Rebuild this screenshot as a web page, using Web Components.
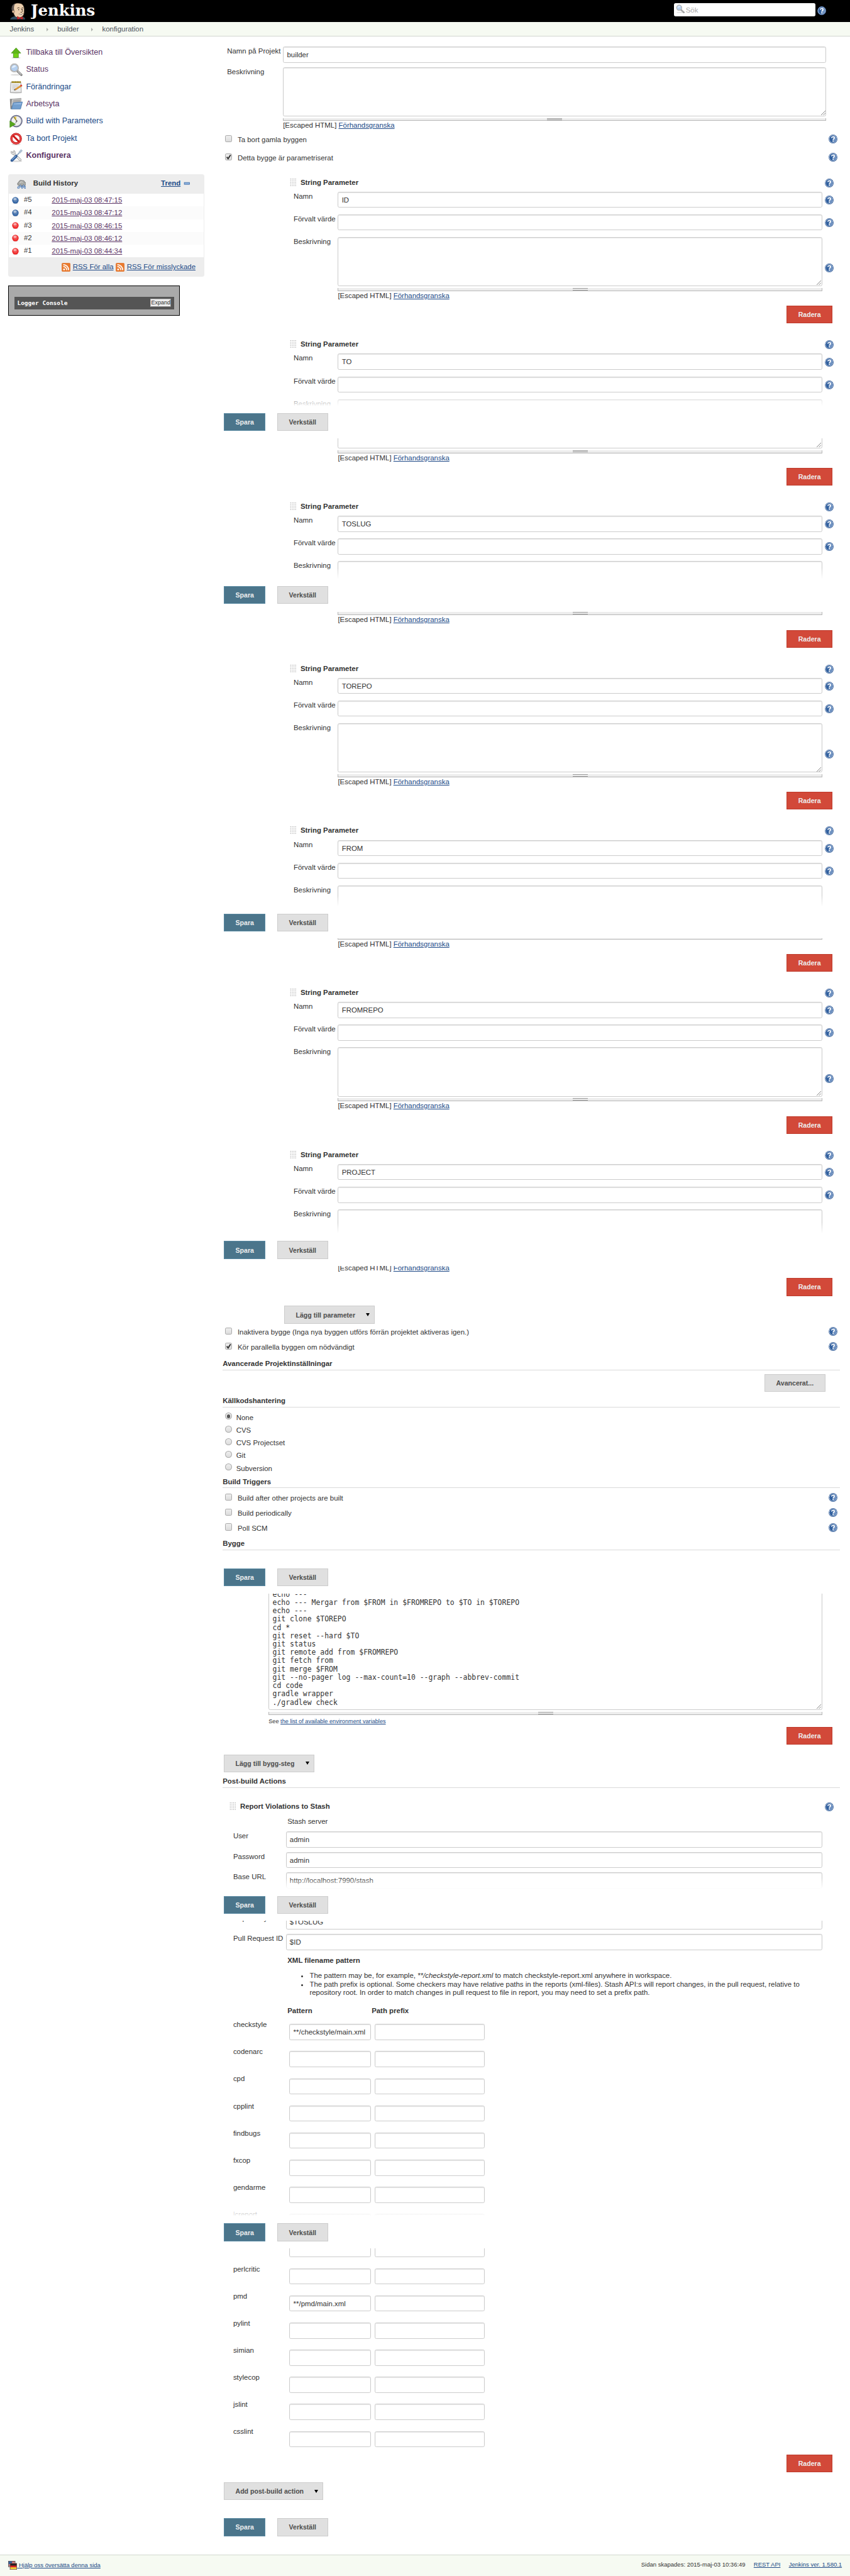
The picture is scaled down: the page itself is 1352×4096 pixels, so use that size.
<!DOCTYPE html>
<html lang="sv">
<head>
<meta charset="utf-8">
<title>builder Config [Jenkins]</title>
<style>
html,body{margin:0;padding:0;background:#fff;overflow:hidden}
body{font-family:"Liberation Sans",Arial,sans-serif;font-size:13px;color:#333}
jk-page{zoom:.881}
</style>
</head>
<body>
<jk-page></jk-page>
<script>
const define=(name,render,css)=>customElements.define(name,class extends HTMLElement{
  constructor(){super();this.attachShadow({mode:'open'});}
  connectedCallback(){
    const a=k=>this.getAttribute(k)||'';
    this.shadowRoot.innerHTML='<style>*{box-sizing:border-box}a{color:#204a87;text-decoration:underline}:host{display:block}'+(css||'')+'</style>'+render(a,this);
  }
});

const ICONS={
up:`<ellipse cx="12" cy="21.5" rx="8" ry="1.5" fill="#000" opacity=".15"/><path d="M12 3.5 20.5 13h-4.300v8h-9v-8H3.500z" fill="#5fb61a" stroke="#3d8a0c" stroke-width=".8"/><path d="M8 14v6.300h7.500V14z" fill="#73d216"/>`,
search:`<ellipse cx="11" cy="21.500" rx="9" ry="1.600" fill="#000" opacity=".12"/><path d="M14 14.500 21.500 21.500" stroke="#777" stroke-width="4" stroke-linecap="round"/><path d="M15.500 15.500 21 20.800" stroke="#c4c4c4" stroke-width="2" stroke-linecap="round"/><circle cx="9" cy="9" r="7" fill="#b5d0f0" stroke="#999" stroke-width="2.200"/><circle cx="9" cy="9" r="7" fill="none" stroke="#ddd" stroke-width="1"/><path d="M4.500 9a5 5 0 0 1 8-3.500q-3 3.500-8 3.500" fill="#e4effb"/>`,
notepad:`<ellipse cx="12" cy="22" rx="11" ry="1.500" fill="#000" opacity=".15"/><path d="M2.500 3h18l1 18.500h-20z" fill="#eee" stroke="#999" stroke-width="1"/><path d="M4 1.500h16.500v3H4z" fill="#b8a13a"/><path d="M5 1v3.500M8 1v3.500M11 1v3.500M14 1v3.500M17 1v3.500M20 1v3.500" stroke="#7c6a18" stroke-width=".8"/><path d="M5 8h12M5 10.500h10M5 13h6M5 15.500h5" stroke="#bbb" stroke-width="1"/><path d="M10 16.500 21 9.500" stroke="#c77b1b" stroke-width="3"/><path d="M10.500 16 20 10" stroke="#f0b24c" stroke-width="1.200"/><path d="M20.500 9.800 22.500 8.500" stroke="#d33" stroke-width="3.200"/><path d="M8 18l1.200-2.800 1.700 2.400z" fill="#444"/>`,
folder:`<path d="M.8 2.500h4V21h-3z" fill="#888"/><path d="M4 3 21 1.500 20 15H3z" fill="#c9c9c9" stroke="#888" stroke-width=".8"/><path d="M7 4.500 19.500 3.500l-.5 5H6z" fill="#aaa"/><path d="M7 9.500 23.500 8 20 20.800H3.800z" fill="#729fcf" stroke="#4573a8" stroke-width=".9"/><path d="M8 10.700 22 9.500l-.8 3H7.500z" fill="#92b7e0"/>`,
clock:`<circle cx="12.500" cy="12" r="10" fill="#eee" stroke="#777a94" stroke-width="2.400"/><path d="M12 12 7 5.500q2.500-2 5.500-1.500z" fill="#edd04a"/><path d="M8 4.500 13.500 12l-2.500 3.500" stroke="#444" stroke-width="1" fill="none"/><circle cx="13" cy="12" r="1.300" fill="#555"/><path d="M.8 11.500 11 17.500.8 23.500z" fill="#57a71c" stroke="#367a0b" stroke-width=".6"/>`,
no:`<ellipse cx="12" cy="22.500" rx="8" ry="1.200" fill="#000" opacity=".15"/><circle cx="12" cy="12" r="8.500" fill="#fff" stroke="#b80f0f" stroke-width="4"/><circle cx="12" cy="12" r="8.500" fill="none" stroke="#e64545" stroke-width="2.600"/><path d="M6.300 6.300 17.700 17.700" stroke="#cc1a1a" stroke-width="3.400"/>`,
tools:`<ellipse cx="12" cy="22" rx="11" ry="1.400" fill="#000" opacity=".15"/><path d="M6 6.500 19.500 19.500" stroke="#999" stroke-width="4.200" stroke-linecap="round"/><path d="M6 6.500 19.500 19.500" stroke="#ececec" stroke-width="2.600" stroke-linecap="round"/><path d="M3 4v3.500q2 3.500 5.500 2.500l2-2q1-4-2.500-6L8 5 6 6.500z" fill="#ddd" stroke="#999" stroke-width=".8"/><path d="M22 2 13 12" stroke="#8ba4bd" stroke-width="2"/><path d="M22.500 1.500 18 6.500" stroke="#b2c2d2" stroke-width="4"/><path d="M12 13 4.500 20.500" stroke="#345f99" stroke-width="5" stroke-linecap="round"/><path d="M11.500 12.800 4.500 19.500" stroke="#7da6d8" stroke-width="1.500"/>`,
help:`<circle cx="8" cy="8" r="7.900" fill="#2f5894"/><circle cx="8" cy="8" r="6.700" fill="none" stroke="#e6eef8" stroke-width=".9"/><circle cx="8" cy="8" r="6.200" fill="#31609f"/><path d="M8 1.800a6.200 6.200 0 0 1 0 12.400z" fill="#6f92c2"/><path d="M5.600 6.300Q5.600 4 8 4t2.300 2.100Q10.300 7.400 8.900 8.100 8 8.600 8 9.600" fill="none" stroke="#fff" stroke-width="1.900"/><path d="M7 10.700h2v2H7z" fill="#fff"/>`,
ball:`<ellipse cx="8" cy="14.500" rx="6" ry="1.500" fill="#000" opacity=".15"/><circle cx="8" cy="8" r="7.500" fill="var(--ball)"/><circle cx="8" cy="7" r="5.200" fill="#fff" opacity=".18"/><ellipse cx="7" cy="5" rx="3.700" ry="2.900" fill="#fff" opacity=".5"/>`,
rain:`<path d="M3.500 10a3 3 0 0 1-.5-5.800A4 4 0 0 1 9 1.300a4 4 0 0 1 5 3.200 2.800 2.800 0 0 1-.8 5.500z" fill="#aaaba6" stroke="#666" stroke-width=".9"/><path d="M5 5.500q2-3.500 5-1" stroke="#d2d2ce" stroke-width="1.500" fill="none"/><g fill="#cfe0f5" stroke="#31609f" stroke-width="1"><ellipse cx="2.600" cy="13.500" rx="1.400" ry="2"/><ellipse cx="6" cy="10.700" rx="1.300" ry="1.700"/><ellipse cx="9" cy="13" rx="1.400" ry="1.900"/><ellipse cx="11.500" cy="10.500" rx="1.200" ry="1.700"/><ellipse cx="14.200" cy="13.500" rx="1.400" ry="2"/></g>`,
rss:`<rect x=".3" y=".3" width="15.400" height="15.400" rx="2.500" fill="#ea7a2e" stroke="#d56318" stroke-width=".6"/><circle cx="4.500" cy="11.800" r="1.600" fill="#fff"/><path d="M3 6.700a6.300 6.300 0 0 1 6.300 6.300M3 3.300A9.700 9.700 0 0 1 12.700 13" stroke="#fff" stroke-width="1.900" fill="none"/>`,
minus:`<rect x=".5" y="5.500" width="11" height="4" fill="#8fb3de" stroke="#3465a4"/>`,
grip:`<path d="M1.500 0v15M4.500 0v15M7.500 0v15M10.500 0v15" stroke="#a6a6a6" stroke-width="1.300" stroke-dasharray="1.300 1.700"/>`,
flags:`<rect x=".5" y=".5" width="12" height="10" fill="#e8b5b5" stroke="#555"/><path d="M1 2h11M1 5h11M1 8h11" stroke="#c33" stroke-width="1.300"/><path d="M1 1h6v5H1z" fill="#31609f"/><rect x="3.500" y="4.500" width="12" height="11" fill="#d22" stroke="#555"/><path d="M4 5h11v3.500H4z" fill="#222"/><path d="M4 11.500h11V15H4z" fill="#f0cf3a"/>`,
head:`<path d="M0 31Q1 26 8 25l9-1q9 1 10 5v2z" fill="#2e4a5c"/><path d="M4 12Q3 3 12 1.200 23 0 25 8q1 4 .5 10Q25 26 17 27.500 9 28 7 21z" fill="#eccfae" stroke="#3a2c22" stroke-width=".8"/><path d="M3.500 16Q.5 5 9 1.800 6 8 7.500 14l-1.500 5q-2 0-2.500-3z" fill="#5c5350"/><circle cx="5.800" cy="16.500" r="2.300" fill="#e2bd98" stroke="#3a2c22" stroke-width=".5"/><path d="M13 10.500q2-2 4-.5M21 10q1.500-1 3 0M20 11q4 5 1.500 6.500h-2.500M16 20.500q3.500 3 8-.5" stroke="#3a2c22" stroke-width="1" fill="none"/><path d="M17 21q3 1.500 6 0" stroke="#fff" stroke-width="1"/><circle cx="15.500" cy="13" r=".9" fill="#222"/><circle cx="22" cy="12.500" r=".9" fill="#222"/><path d="M13 25l5 2.500 5-2v5.300l-5-2-5 2z" fill="#d2262b" stroke="#7c1013" stroke-width=".5"/>`
};
define('jk-icon',a=>{
  const w=a('w')||16,h=a('h')||w,v=a('box')||`${w} ${h}`;
  return `<svg width="${w}" height="${h}" viewBox="0 0 ${v}" aria-hidden="true">${ICONS[a('name')]}</svg>`;
},':host{display:block;flex:none}svg{display:block}');

define('jk-header',()=>`
<div class="logo"><jk-icon name="head" w="28" h="31" box="28 31"></jk-icon>
<svg width="120" height="36"><text x="0" y="25.300" textLength="116" lengthAdjust="spacingAndGlyphs" font-family="DejaVu Serif" font-weight="bold" font-size="27.500" fill="#fff">Jenkins</text></svg></div>
<div class="right"><div class="search"><jk-icon name="search" w="16" box="24 24"></jk-icon><span>Sök</span></div><jk-icon name="help"></jk-icon></div>`,
`:host{background:#000;height:40px;display:flex;justify-content:space-between;padding:0 43px 0 18px}
.logo{display:flex;gap:10px;padding-top:4px}.logo svg{margin-top:-1px}
.right{display:flex;gap:4px;padding-top:6px}.right>jk-icon{margin-top:5px}
.search{width:255px;height:24px;background:#fff;border-radius:3px;display:flex;align-items:center;gap:2px;padding:1px 0 0 3px;color:#aaa}
.search jk-icon{margin-top:-3px;height:17px}`);

define('jk-crumbs',()=>'<span>Jenkins</span><i></i><span>builder</span><i></i><span>konfiguration</span>',
`:host{display:flex;height:26px;background:#f6faf2;border-bottom:1px solid #d3d7cf;padding-left:17.500px;color:#4d545d;line-height:25px}
i{width:4px;margin:9.500px 16px 0 22px;height:0;border:4px solid transparent;border-left-color:#b0b3ae;border-right:0}`);

define('jk-task',a=>`<jk-icon name="${a('icon')}" w="24"></jk-icon><span><slot></slot></span>`,
`:host{display:flex;height:31px;gap:6px;font-size:14.300px;line-height:24px;color:#204a87}
:host([visited]){color:#5c3566}:host([current]){font-weight:bold}`);

define('jk-build',a=>`<jk-icon name="ball" w="12.500" box="16 16" style="--ball:${a('color')}"></jk-icon><b>#${a('n')}</b><a>${a('date')}</a>`,
`:host{display:flex;height:23px;padding-left:6px;line-height:22px}:host([alt]){background:#fbfbfb}
jk-icon{margin-top:5px;width:21px}b{font-weight:normal;width:50.500px}a{color:#5c3566;line-height:24px}`);

define('jk-history',()=>`
<header><jk-icon name="rain" w="16.500" box="16 16"></jk-icon><b>Build History</b><a>Trend</a><jk-icon name="minus" w="12" box="12 14"></jk-icon></header>
<section><jk-build n="5" color="#3465a4" date="2015-maj-03 08:47:15"></jk-build>
<jk-build alt n="4" color="#3465a4" date="2015-maj-03 08:47:12"></jk-build>
<jk-build n="3" color="#ef2929" date="2015-maj-03 08:46:15"></jk-build>
<jk-build alt n="2" color="#ef2929" date="2015-maj-03 08:46:12"></jk-build>
<jk-build n="1" color="#ef2929" date="2015-maj-03 08:44:34"></jk-build></section>
<footer><jk-icon name="rss"></jk-icon><a>RSS För alla</a><jk-icon name="rss"></jk-icon><a>RSS För misslyckade</a></footer>`,
`:host{background:#ededed;border-radius:4px;width:354px;height:185px;padding:0 1px;box-sizing:border-box}
header{height:35px;display:flex;padding:0 25px 0 14.500px;line-height:34px}header b{margin-left:13px;flex:1}header a{font-weight:bold}
header jk-icon{margin-top:9.500px}header jk-icon:last-child{margin-left:5px;margin-top:10px}
section{background:#fff}footer{display:flex;justify-content:flex-end;padding:9px 15px 0 0;gap:4px;line-height:17px}footer jk-icon{margin-top:1px}`);

define('jk-logger',()=>'<div><b>Logger Console</b><span>Expand</span></div>',
`:host{width:310px;height:55px;background:#aaa;border:1px solid #000;padding:20px 10px 0;margin-top:15px;box-sizing:border-box}
div{background:#555;height:23px;display:flex;justify-content:space-between;padding:3px 5px 0}
b{font:bold 10.800px/17px "DejaVu Sans Mono",monospace;color:#fff}span{background:#eee;border:1px solid #bbb;border-right-color:#888;border-bottom-color:#888;font-size:10.200px;line-height:13px;height:15px;padding:0 1px;width:38px;text-align:center;white-space:nowrap}`);

define('jk-button',a=>'<slot></slot>'+(a('menu')?'<i></i>':''),
`:host{display:inline-flex;align-items:center;height:32px;padding:0 20px;background:#e0e0e0;border:1px solid #ccc;color:#4d4d4d;font-weight:bold;font-size:12px;white-space:nowrap;box-sizing:border-box}
:host([kind=primary]){background:#4b758b;border-color:#5788a1;color:#eee}:host([kind=danger]){background:#d24939;border-color:#be3a2b;color:#eee}
:host([menu]){padding-right:8px;justify-content:space-between}i{border:4px solid transparent;border-top:6.500px solid #000;border-bottom:0}`);

define('jk-row',()=>'<slot></slot>',':host{display:flex}:host([end]){justify-content:flex-end}');

define('jk-input',a=>`<span>${a('value')}</span>`,
`:host{height:29px;border:1px solid #ccc;border-radius:3px;background:#fff;box-shadow:inset 0 1px 1.500px rgba(0,0,0,.1);padding:0 6px;line-height:27.500px;box-sizing:border-box;white-space:nowrap;overflow:hidden}`);

define('jk-textarea',()=>`<div class="box"><slot></slot><svg width="8" height="8"><path d="M0 8 8 0M4 8 8 4" stroke="#666" stroke-width=".9"/></svg></div><div class="bar"><i></i></div><div class="note"><slot name="note"></slot></div>`,
`.box{height:var(--h,89px);border:1px solid #ccc;border-radius:3px;background:#fff;box-shadow:inset 0 1px 1.500px rgba(0,0,0,.1);position:relative}
svg{position:absolute;right:1px;bottom:1px}.bar{margin-top:3px;height:5.500px;background:#ededed;border:1px solid #b8b8b8;border-top:0;display:flex;justify-content:center}
i{width:27px;height:4.200px;border:1px solid #999;border-width:1.200px 0}.note{line-height:16px;white-space:nowrap}`);

define('jk-field',a=>`<label>${a('label')}</label>${a('area')?'<jk-textarea><span slot="note">[Escaped HTML] <a>Förhandsgranska</a></span></jk-textarea>':`<jk-input value="${a('value')}"></jk-input>`}${a('help')?'<jk-icon name="help"></jk-icon>':''}`,
`:host{display:grid;grid-template-columns:var(--label) var(--control) 16px;margin-left:var(--indent);height:29px}
:host([area]){height:113.500px}label{line-height:16px;white-space:nowrap}jk-icon{margin:7px 0 0 4px}:host([area]) jk-icon{margin-top:48px}`);

define('jk-title',a=>`<jk-icon name="grip" w="12" h="15"></jk-icon><b><slot></slot></b><jk-icon name="help"></jk-icon>`,
`:host{display:flex;height:16px;margin-right:12px}b{flex:1;margin-left:7.500px;line-height:15px}`);

define('jk-param',a=>`<jk-title>String Parameter</jk-title><jk-field style="margin-top:8px" label="Namn" value="${a('name')}" help="1"></jk-field>
<jk-field style="margin-top:12px" label="Förvalt värde" help="1"></jk-field><jk-field style="margin-top:12px" label="Beskrivning" area="1" help="1"></jk-field>
<jk-row end><jk-button kind="danger">Radera</jk-button></jk-row>`,
`:host{--indent:128px;--label:80px;--control:875px;height:292.500px}jk-title{margin-left:121px}jk-row{margin:10.500px 14px 0 0}`);

define('jk-check',a=>`<i>${a('on')?'<svg width="13" height="13"><path d="M3 6.500 5.500 9.500 10 2.500" fill="none" stroke="#333" stroke-width="2.200"/></svg>':''}</i><span><slot></slot></span><jk-icon name="help"></jk-icon>`,
`:host{display:flex;height:16px;padding:0 5px 0 4px}i{width:12.500px;height:13px;margin-top:1px;border:1px solid #aaa;border-radius:2.500px;background:linear-gradient(#eee,#dcdcdc)}svg{display:block;margin:-1px}
span{flex:1;margin-left:10.500px;line-height:20px}`);

define('jk-radio',a=>`<i>${a('on')?'<u></u>':''}</i><span><slot></slot></span>`,
`:host{display:flex;height:23px;padding-left:4.500px}i{width:12px;height:12.500px;margin-top:1px;border:1px solid #aaa;border-radius:50%;background:linear-gradient(#eee,#dcdcdc);display:grid;place-items:center}u{width:6px;height:6px;border-radius:50%;background:#555}span{margin-left:8px;line-height:20px}`);

define('jk-section',()=>'<slot></slot>',':host{height:20px;line-height:18px;font-weight:bold;border-bottom:1px solid #dadada;box-sizing:border-box}');

define('jk-savebar',()=>'<jk-button kind="primary">Spara</jk-button><jk-button>Verkställ</jk-button>',
`:host{display:flex;gap:21px;padding-left:2px}
:host([floating]){position:absolute;left:0;right:0;height:78px;box-sizing:border-box;padding-top:33px;background:linear-gradient(rgba(255,255,255,0),#fff 20px)}`);

define('jk-violation',a=>`<span>${a('name')}</span><jk-input value="${a('value')}"></jk-input><jk-input></jk-input>`,
`:host{display:grid;grid-template-columns:94px 148px 198px;column-gap:7px;margin-left:19px;height:49px}
span{line-height:16px}jk-input{margin-top:7px;padding-left:6.500px}`);

define('jk-config',()=>{
const params=['ID','TO','TOSLUG','TOREPO','FROM','FROMREPO','PROJECT'].map(n=>`<jk-param name="${n}"></jk-param>`).join('');
const bars=[746,1058,1649,2240,2831,3422,4013].map(y=>`<jk-savebar floating style="top:${y-33-66}px"></jk-savebar>`).join('');
const tools=['checkstyle','codenarc','cpd','cpplint','findbugs','fxcop','gendarme','jcreport','','perlcritic','pmd','pylint','simian','stylecop','jslint','csslint']
 .map(n=>`<jk-violation name="${n}" value="${n==='checkstyle'||n==='pmd'?`**/${n}/main.xml`:''}"></jk-violation>`).join('');
const m=n=>`style="margin-top:${n}px"`;
return `
<jk-field class="top" label="Namn på Projekt" value="builder"></jk-field>
<jk-field class="top" ${m(8)} label="Beskrivning" area="1"></jk-field>
<jk-check ${m(8.5)}>Ta bort gamla byggen</jk-check>
<jk-check ${m(17)} on="1">Detta bygge är parametriserat</jk-check>
<div ${m(30)}>${params}</div>
<jk-row style="margin:-12.500px 0 0 111px"><jk-button menu="1" style="width:164px">Lägg till parameter</jk-button></jk-row>
<jk-check ${m(6)}>Inaktivera bygge (Inga nya byggen utförs förrän projektet aktiveras igen.)</jk-check>
<jk-check ${m(11)} on="1">Kör parallella byggen om nödvändigt</jk-check>
<jk-section ${m(15)}>Avancerade Projektinställningar</jk-section>
<jk-row end style="margin:7px 27px 0 0"><jk-button>Avancerat...</jk-button></jk-row>
<jk-section ${m(8)}>Källkodshantering</jk-section>
<jk-radio ${m(9)} on="1">None</jk-radio><jk-radio>CVS</jk-radio><jk-radio>CVS Projectset</jk-radio><jk-radio>Git</jk-radio><jk-radio>Subversion</jk-radio>
<jk-section ${m(2)}>Build Triggers</jk-section>
<jk-check ${m(9)}>Build after other projects are built</jk-check>
<jk-check ${m(11)}>Build periodically</jk-check>
<jk-check ${m(11)}>Poll SCM</jk-check>
<jk-section ${m(13)}>Bygge</jk-section>
<jk-textarea style="--h:267px;margin:22px 32px 0 83px"><pre>echo ---
echo --- Mergar from $FROM in $FROMREPO to $TO in $TOREPO
echo ---
git clone $TOREPO
cd *
git reset --hard $TO
git status
git remote add from $FROMREPO
git fetch from
git merge $FROM
git --no-pager log --max-count=10 --graph --abbrev-commit
cd code
gradle wrapper
./gradlew check</pre><div slot="note" class="see">See <a>the list of available environment variables</a></div></jk-textarea>
<jk-row end style="margin:1.500px 14px 0 0"><jk-button kind="danger">Radera</jk-button></jk-row>
<jk-row style="margin:18px 0 0 2px"><jk-button menu="1" style="width:164px">Lägg till bygg-steg</jk-button></jk-row>
<jk-section ${m(8)}>Post-build Actions</jk-section>
<jk-title style="margin-top:26px;margin-left:12px">Report Violations to Stash</jk-title>
<p ${m(11)}>Stash server</p>
<div class="stash"><jk-field label="User" value="admin"></jk-field><jk-field label="Password" value="admin"></jk-field><jk-field label="Base URL" value="http://localhost:7990/stash"></jk-field><jk-field label="" value=""></jk-field><jk-field label="Repository" value="$TOSLUG"></jk-field><jk-field label="Pull Request ID" value="$ID"></jk-field></div>
<p ${m(11)}><b>XML filename pattern</b></p>
<ul><li>The pattern may be, for example, <em>**/checkstyle-report.xml</em> to match checkstyle-report.xml anywhere in workspace.</li>
<li>The path prefix is optional. Some checkers may have relative paths in the reports (xml-files). Stash API:s will report changes, in the pull request, relative to repository root. In order to match changes in pull request to file in report, you may need to set a prefix path.</li></ul>
<p class="cols"><b>Pattern</b><b>Path prefix</b></p>
<div ${m(9.5)}>${tools}</div>
<jk-row end style="margin:.5px 14px 0 0"><jk-button kind="danger">Radera</jk-button></jk-row>
<jk-row style="margin:18px 0 0 2px"><jk-button menu="1" style="width:180px">Add post-build action</jk-button></jk-row>
<jk-savebar ${m(33)}></jk-savebar>${bars}`;},
`:host{position:relative;width:1115px;padding-top:18px;display:block;box-sizing:border-box}
.top{--indent:8px;--label:101px;--control:981px}.stash{--indent:19px;--label:95px;--control:969px;display:grid;gap:8px;margin-top:10px}
pre{margin:0;padding:49.500px 0 0 6px;font:13px/15px "DejaVu Sans Mono",monospace}.see{font-size:10.400px;padding-top:4px}
p{margin:0 0 0 117px;line-height:16px}ul{margin:12.500px 0 0 117px;padding-left:40px;line-height:15px;width:932px}
.cols{display:flex;margin-top:16.500px}.cols b:first-child{width:152px}`);

define('jk-footer',()=>`<div class="l"><jk-icon name="flags"></jk-icon><a>&nbsp;Hjälp oss översätta denna sida</a></div><div class="r"><span>Sidan skapades: 2015-maj-03 10:36:49</span><a>REST API</a><a>Jenkins ver. 1.580.1</a></div>`,
`:host{position:relative;display:flex;justify-content:space-between;height:39px;background:#f6faf2;border-top:1px solid #d3d7cf;padding:9.500px 15px 0;font-size:10.800px;line-height:14px;margin-top:34px;box-sizing:border-box}
.l{display:flex}.l a{line-height:15px}.r{display:flex;gap:15px}`);

define('jk-page',()=>`<jk-header></jk-header><jk-crumbs></jk-crumbs>
<main><nav><jk-task icon="up" visited>Tillbaka till Översikten</jk-task><jk-task icon="search" visited>Status</jk-task><jk-task icon="notepad">Förändringar</jk-task><jk-task icon="folder" visited>Arbetsyta</jk-task><jk-task icon="clock">Build with Parameters</jk-task><jk-task icon="no">Ta bort Projekt</jk-task><jk-task icon="tools" visited current>Konfigurera</jk-task>
<div><jk-history></jk-history><jk-logger></jk-logger></div></nav><jk-config></jk-config></main><jk-footer></jk-footer>`,
`:host{width:1535px;height:4650px;background:#fff;overflow:hidden}
main{display:flex}nav{width:402px;flex:none;padding:17px 0 0 17px}nav div{margin:15px 0 0 -2px}jk-footer{height:42px}`);
</script>
</body>
</html>
